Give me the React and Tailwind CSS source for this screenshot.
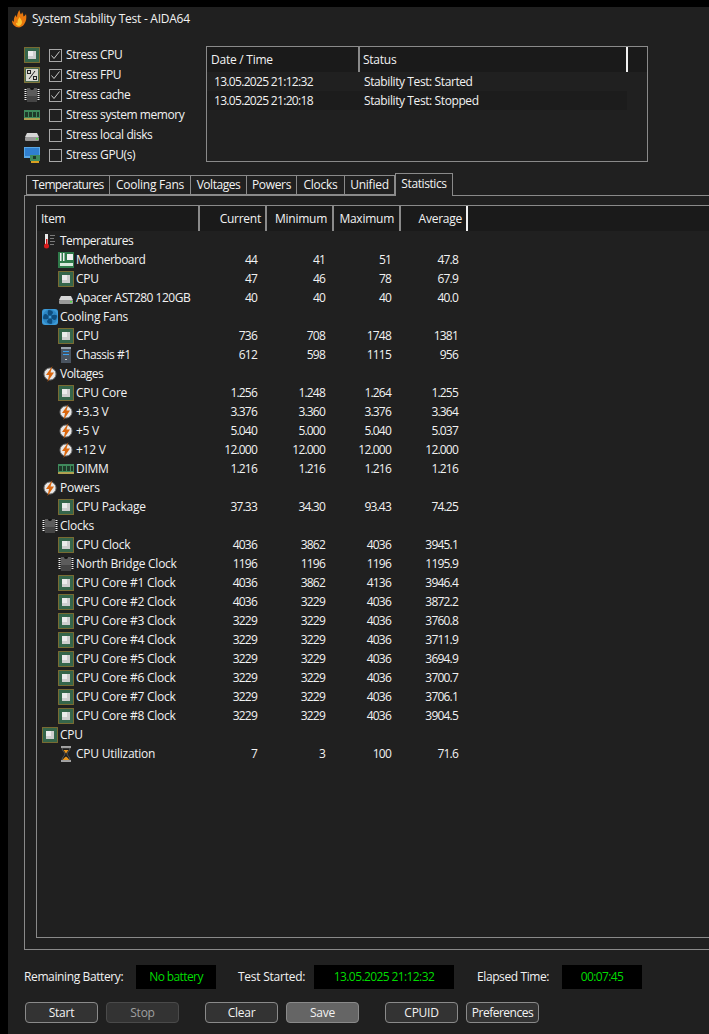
import React from "react";

function FlameIcon() {
  return (
    <svg width="16" height="18" viewBox="0 0 16 18">
      <path d="M8.500 0c.5 2 .5 3 1.500 4.500C10.500 3.500 11 3 11 2c1 1.500 1.500 3 1.500 4.500C13.500 6 14.500 5 15 4c.8 3.500.3 7.500-2 10.500-1.500 2-4 3.300-6.500 2.800C3 16.500 1 13.500 1 10.500c.6.200 1.500.8 2 1.500-.5-3 .2-5.500 2-7 0 1 .3 1.800 1 2.500C6 4.500 7 2 8.500 0z" fill="#e8780e" />
      <path d="M8.500 7c.5 1.500 2.500 2.500 2.500 5 0 2-1.500 4-3.500 4-1.800-.5-3-2-2.500-3.500.5.500 1 .8 1.500.8C6 11 7.500 9 8.500 7z" fill="#fbc531" />
    </svg>
  );
}

function CpuIcon() {
  return (
    <svg width="16" height="16" viewBox="0 0 16 16">
      <rect x="0.500" y="0.500" width="15" height="15" fill="#23392c" stroke="#d0aa3e" strokeDasharray="1 1" />
      <rect x="1" y="1" width="14" height="14" fill="#35654a" />
      <rect x="4" y="4" width="8" height="8" fill="#cfcfcf" />
      <rect x="4" y="4" width="5" height="5" fill="#ececec" />
    </svg>
  );
}

function FpuIcon() {
  return (
    <svg width="16" height="16" viewBox="0 0 16 16">
      <rect x="0.500" y="0.500" width="15" height="15" fill="#4a6a50" stroke="#d0aa3e" strokeDasharray="1 1" />
      <rect x="2" y="2" width="12" height="12" fill="#d8d8d0" />
      <path d="M5 12 11 4" stroke="#222" strokeWidth="1" />
      <rect x="3.500" y="3.500" width="3" height="3" fill="none" stroke="#222" strokeWidth="1" />
      <rect x="9.500" y="9.500" width="3" height="3" fill="none" stroke="#222" strokeWidth="1" />
    </svg>
  );
}

function ChipIcon() {
  return (
    <svg width="16" height="16" viewBox="0 0 16 16">
      <path d="M0.500 2.500h2M0.500 4.500h2M0.500 6.500h2M0.500 8.500h2M0.500 10.500h2M0.500 12.500h2M13.500 2.500h2M13.500 4.500h2M13.500 6.500h2M13.500 8.500h2M13.500 10.500h2M13.500 12.500h2" stroke="#f0f0f0" strokeWidth="1" />
      <rect x="3" y="1" width="10" height="14" fill="#5c5c5c" />
      <rect x="3" y="9" width="10" height="6" fill="#454545" />
      <path d="M6 1a2 2 0 0 0 4 0z" fill="#111111" />
    </svg>
  );
}

function RamIcon() {
  return (
    <svg width="16" height="16" viewBox="0 0 16 16">
      <rect x="0" y="3" width="16" height="9" fill="#3f8a5c" />
      <rect x="0" y="11" width="16" height="2" fill="#b0a050" />
      <path d="M1 5h3v5H1zM5 5h3v5H5zM9 5h3v5H9zM13 5h2v5h-2z" fill="#1f3a2a" />
    </svg>
  );
}

function DiskIcon() {
  return (
    <svg width="16" height="16" viewBox="0 0 16 16">
      <path d="M3 6h10l2 4H1z" fill="#d6d6d6" />
      <rect x="1" y="10" width="14" height="4" rx="1" fill="#9a9a9a" />
      <rect x="12" y="11" width="2" height="1.500" fill="#4ade40" />
    </svg>
  );
}

function GpuIcon() {
  return (
    <svg width="16" height="16" viewBox="0 0 16 16">
      <rect x="0" y="0" width="16" height="11" fill="#5aa8e6" />
      <rect x="1" y="1" width="14" height="8" fill="#2f7fd0" />
      <rect x="6" y="8" width="10" height="6" fill="#3f8a5c" />
      <rect x="9" y="9" width="3" height="3" fill="#1f3a2a" />
      <rect x="7" y="14" width="8" height="2" fill="#d8a020" />
    </svg>
  );
}

function ThermIcon() {
  return (
    <svg width="16" height="16" viewBox="0 0 16 16">
      <rect x="3" y="1" width="3" height="11" fill="#e8e8e8" />
      <rect x="4" y="6" width="1.500" height="7" fill="#d81c1c" />
      <circle cx="4.500" cy="13" r="2.500" fill="#d81c1c" />
      <path d="M8 2.500h5M8 5.500h4M8 8.500h5M8 11.500h4" stroke="#7a7a7a" strokeWidth="1" />
    </svg>
  );
}

function MbIcon() {
  return (
    <svg width="16" height="16" viewBox="0 0 16 16">
      <rect width="16" height="16" fill="#2f7a4a" />
      <path d="M2 1h1.500v8H2zM5 1h1.500v8H5z" fill="#f0f0f0" />
      <rect x="9" y="2" width="6" height="6" fill="#f0f0f0" />
      <rect x="2" y="11" width="13" height="3" fill="#d8e8dc" />
    </svg>
  );
}

function FanIcon() {
  return (
    <svg width="16" height="16" viewBox="0 0 16 16">
      <rect width="16" height="16" rx="3" fill="#3d9bd8" />
      <circle cx="8" cy="8" r="7.500" fill="#2c86c4" />
      <path d="M8 8C5.500 6.500 5 3 6.500 1c2.500 0 4.500 1 4.500 2.500S9 6 8 8zM8 8c1.500-2.500 5-3 7-1.500 0 2.500-1 4.500-2.500 4.500S10 9 8 8zM8 8c2.500 1.500 3 5 1.500 7C7 15 5 14 5 12.500S7 10 8 8zM8 8c-1.500 2.500-5 3-7 1.500C1 7 2 5 3.500 5S6 7 8 8z" fill="#0e4d7e" />
      <circle cx="8" cy="8" r="1.500" fill="#3d9bd8" />
    </svg>
  );
}

function BoltIcon() {
  return (
    <svg width="16" height="16" viewBox="0 0 16 16">
      <circle cx="8" cy="8" r="6" fill="#e8e8e8" stroke="#777" />
      <path d="M10.500 0 4 9h3L5.500 16 12 6.500H8.500z" fill="#d9660e" />
    </svg>
  );
}

function ChassisIcon() {
  return (
    <svg width="16" height="16" viewBox="0 0 16 16">
      <rect x="3" y="0" width="10" height="16" fill="#4a5460" />
      <rect x="3" y="0" width="10" height="2" fill="#9aa4ae" />
      <path d="M5 4.500h6M5 7.500h6" stroke="#3aa0f0" strokeWidth="1" />
      <rect x="7" y="12" width="2" height="1" fill="#d0d0d0" />
    </svg>
  );
}

function HourglassIcon() {
  return (
    <svg width="16" height="16" viewBox="0 0 16 16">
      <path d="M3 1h10M3 15h10" stroke="#d0d0d0" strokeWidth="1.500" />
      <path d="M4 2h8c0 3-3 4.500-3 6s3 3 3 6H4c0-3 3-4.500 3-6S4 5 4 2z" fill="#1c1c1c" stroke="#888" strokeWidth="0.500" />
      <path d="M5.500 4h5L8 7.500zM4.800 14c.5-1.500 2-2.500 3.200-3.500 1.200 1 2.700 2 3.200 3.500z" fill="#e8961e" />
    </svg>
  );
}

const stressItems = [
  { label: "Stress CPU", icon: <CpuIcon />, checked: true },
  { label: "Stress FPU", icon: <FpuIcon />, checked: true },
  { label: "Stress cache", icon: <ChipIcon />, checked: true },
  { label: "Stress system memory", icon: <RamIcon />, checked: false },
  { label: "Stress local disks", icon: <DiskIcon />, checked: false },
  { label: "Stress GPU(s)", icon: <GpuIcon />, checked: false },
];

const tabs = [
  { label: "Temperatures", cls: "w-[84px] tracking-[-0.65px] border-l" },
  { label: "Cooling Fans", cls: "w-[81px]" },
  { label: "Voltages", cls: "w-[56px] tracking-[-0.45px]" },
  { label: "Powers", cls: "w-[50px] tracking-[-0.35px]" },
  { label: "Clocks", cls: "w-[48px]" },
  { label: "Unified", cls: "w-[50px]" },
];

const rows = [
  { group: true, tight: true, name: "Temperatures", icon: <ThermIcon /> },
  { tight: true, name: "Motherboard", icon: <MbIcon />, v: ["44", "41", "51", "47.8"] },
  { name: "CPU", icon: <CpuIcon />, v: ["47", "46", "78", "67.9"] },
  { tight: true, name: "Apacer AST280 120GB", icon: <DiskIcon />, v: ["40", "40", "40", "40.0"] },
  { group: true, name: "Cooling Fans", icon: <FanIcon /> },
  { name: "CPU", icon: <CpuIcon />, v: ["736", "708", "1748", "1381"] },
  { tight: true, name: "Chassis #1", icon: <ChassisIcon />, v: ["612", "598", "1115", "956"] },
  { group: true, tight: true, name: "Voltages", icon: <BoltIcon /> },
  { name: "CPU Core", icon: <CpuIcon />, v: ["1.256", "1.248", "1.264", "1.255"] },
  { name: "+3.3 V", icon: <BoltIcon />, v: ["3.376", "3.360", "3.376", "3.364"] },
  { name: "+5 V", icon: <BoltIcon />, v: ["5.040", "5.000", "5.040", "5.037"] },
  { name: "+12 V", icon: <BoltIcon />, v: ["12.000", "12.000", "12.000", "12.000"] },
  { name: "DIMM", icon: <RamIcon />, v: ["1.216", "1.216", "1.216", "1.216"] },
  { group: true, name: "Powers", icon: <BoltIcon /> },
  { name: "CPU Package", icon: <CpuIcon />, v: ["37.33", "34.30", "93.43", "74.25"] },
  { group: true, name: "Clocks", icon: <ChipIcon /> },
  { name: "CPU Clock", icon: <CpuIcon />, v: ["4036", "3862", "4036", "3945.1"] },
  { name: "North Bridge Clock", icon: <ChipIcon />, v: ["1196", "1196", "1196", "1195.9"] },
  { name: "CPU Core #1 Clock", icon: <CpuIcon />, v: ["4036", "3862", "4136", "3946.4"] },
  { name: "CPU Core #2 Clock", icon: <CpuIcon />, v: ["4036", "3229", "4036", "3872.2"] },
  { name: "CPU Core #3 Clock", icon: <CpuIcon />, v: ["3229", "3229", "4036", "3760.8"] },
  { name: "CPU Core #4 Clock", icon: <CpuIcon />, v: ["3229", "3229", "4036", "3711.9"] },
  { name: "CPU Core #5 Clock", icon: <CpuIcon />, v: ["3229", "3229", "4036", "3694.9"] },
  { name: "CPU Core #6 Clock", icon: <CpuIcon />, v: ["3229", "3229", "4036", "3700.7"] },
  { name: "CPU Core #7 Clock", icon: <CpuIcon />, v: ["3229", "3229", "4036", "3706.1"] },
  { name: "CPU Core #8 Clock", icon: <CpuIcon />, v: ["3229", "3229", "4036", "3904.5"] },
  { group: true, name: "CPU", icon: <CpuIcon /> },
  { name: "CPU Utilization", icon: <HourglassIcon />, v: ["7", "3", "100", "71.6"] },
];

const buttons = [
  { label: "Start", cls: "ml-0 bg-[#333333] border-[#8a8a8a] text-[#f2f2f2]" },
  { label: "Stop", cls: "ml-[8px] bg-[#333333] border-[#4a4a4a] text-[#a0a0a0]" },
  { label: "Clear", cls: "ml-[26px] bg-[#333333] border-[#8a8a8a] text-[#f2f2f2]" },
  { label: "Save", cls: "ml-[8px] bg-[#656565] border-[#8a8a8a] text-[#f2f2f2]" },
  { label: "CPUID", cls: "ml-[26px] bg-[#333333] border-[#8a8a8a] text-[#f2f2f2]" },
  { label: "Preferences", cls: "ml-[8px] tracking-[-0.5px] bg-[#333333] border-[#8a8a8a] text-[#f2f2f2]" },
];

function Checkbox({ checked }) {
  return (
    <span className="flex h-[13px] w-[13px] shrink-0 items-center justify-center border border-[#a8a8a8]">
      {checked && (
        <svg width="11" height="11" viewBox="0 0 11 11">
          <path d="M1.500 5.500 4 8.500 9.500 1.500" fill="none" stroke="#c8c8c8" strokeWidth="1" />
        </svg>
      )}
    </span>
  );
}

function ValueBox({ width, children }) {
  return (
    <div className={`flex h-[24px] shrink-0 items-center justify-center bg-black tracking-[-0.6px] text-[#00dc00] ${width}`}>
      {children}
    </div>
  );
}

export default function App() {
  return (
    <div
      className="h-[1034px] w-[709px] overflow-hidden bg-black pl-[8px] pt-[7px] text-[12px] leading-[16px] tracking-[-0.25px] text-[#f2f2f2]"
      style={{ fontFamily: '"Open Sans", "Noto Sans", sans-serif' }}
    >
      <div className="h-full w-full bg-[#202020]">
        {/* Title bar */}
        <div className="flex h-[23px] items-center pl-[3px]">
          <FlameIcon />
          <span className="ml-[5px]">System Stability Test - AIDA64</span>
        </div>

        {/* Stress options and log */}
        <div className="mt-[15px] flex h-[116px] items-start pl-[16px]">
          <div className="flex w-[182px] flex-col tracking-[-0.42px]">
            {stressItems.map((s) => (
              <div key={s.label} className="flex h-[20px] items-center">
                <span className="flex w-[16px] shrink-0">{s.icon}</span>
                <span className="ml-[9px]"><Checkbox checked={s.checked} /></span>
                <span className="ml-[4px] whitespace-nowrap">{s.label}</span>
              </div>
            ))}
          </div>
          <div className="mt-px h-[116px] w-[442px] border border-[#8a8a8a]">
            <div className="flex h-[25px] items-stretch bg-[#1a1a1a]">
              <div className="flex w-[153px] items-center border-r-2 border-[#8a8a8a] pl-[4px]">Date / Time</div>
              <div className="flex w-[268px] items-center border-r-2 border-[#f0f0f0] pl-[3px]">Status</div>
            </div>
            <div className="flex h-[19px] items-center">
              <span className="w-[157px] pl-[7px] tracking-[-0.68px]">13.05.2025 21:12:32</span>
              <span className="tracking-[-0.4px]">Stability Test: Started</span>
            </div>
            <div className="flex h-[19px] w-[420px] items-center bg-[#1c1c1c]">
              <span className="w-[157px] pl-[7px] tracking-[-0.68px]">13.05.2025 21:20:18</span>
              <span className="tracking-[-0.4px]">Stability Test: Stopped</span>
            </div>
          </div>
        </div>

        {/* Tabs */}
        <div className="mt-[12px] flex h-[22px] items-end pl-[18px]">
          {tabs.map((t) => (
            <div
              key={t.label}
              className={`flex h-[20px] items-center justify-center border-y border-r border-[#8a8a8a] ${t.cls}`}
            >
              {t.label}
            </div>
          ))}
          <div className="relative z-10 -mb-px flex h-[23px] w-[58px] items-center justify-center border-x border-t border-[#8a8a8a] bg-[#202020] pb-[2px] tracking-[-0.4px]">
            Statistics
          </div>
        </div>

        {/* Panel */}
        <div className="ml-[16px] h-[755px] border-y border-l border-[#8a8a8a] pl-[11px] pt-[9px]">
          <div className="h-[733px] border-y border-l border-[#8a8a8a]">
            <div className="flex h-[25px] items-stretch bg-[#1a1a1a]">
              <div className="flex w-[163px] items-center border-r-2 border-[#8a8a8a] pl-[4px]">Item</div>
              <div className="flex w-[67px] items-center justify-end border-r-2 border-[#8a8a8a] pr-[4px]">Current</div>
              <div className="flex w-[67px] items-center justify-end border-r-2 border-[#8a8a8a] pr-[5px]">Minimum</div>
              <div className="flex w-[67px] items-center justify-end border-r-2 border-[#8a8a8a] pr-[5px]">Maximum</div>
              <div className="flex w-[67px] items-center justify-end border-r-2 border-[#f0f0f0] pr-[4px]">Average</div>
            </div>
            {rows.map((r, i) => (
              <div key={i} className="flex h-[19px] items-center">
                <div className={`flex w-[161px] items-center ${r.group ? "pl-[5px]" : "pl-[21px]"}`}>
                  <span className="flex w-[16px] shrink-0">{r.icon}</span>
                  <span className={`ml-[2px] whitespace-nowrap ${r.tight ? "tracking-[-0.5px]" : ""}`}>{r.name}</span>
                </div>
                {r.v && (
                  <div className="flex tracking-[-0.8px]">
                    <span className="w-[68px] pr-[9px] text-right">{r.v[0]}</span>
                    <span className="w-[68px] pr-[9px] text-right">{r.v[1]}</span>
                    <span className="w-[66px] pr-[9px] text-right">{r.v[2]}</span>
                    <span className="w-[67px] pr-[9px] text-right">{r.v[3]}</span>
                  </div>
                )}
              </div>
            ))}
          </div>
        </div>

        {/* Status row */}
        <div className="mt-[15px] flex items-center pl-[16px]">
          <span className="w-[112px] whitespace-nowrap tracking-[-0.38px]">Remaining Battery:</span>
          <ValueBox width="w-[80px]">No battery</ValueBox>
          <span className="ml-[22px] w-[76px] whitespace-nowrap">Test Started:</span>
          <ValueBox width="w-[140px]">13.05.2025 21:12:32</ValueBox>
          <span className="ml-[23px] w-[85px] whitespace-nowrap tracking-[-0.4px]">Elapsed Time:</span>
          <ValueBox width="w-[80px]">00:07:45</ValueBox>
        </div>

        {/* Buttons */}
        <div className="mt-[13px] flex pl-[17px]">
          {buttons.map((b) => (
            <button key={b.label} className={`flex h-[21px] w-[73px] items-center justify-center rounded-[4px] border ${b.cls}`}>
              {b.label}
            </button>
          ))}
        </div>
      </div>
    </div>
  );
}
